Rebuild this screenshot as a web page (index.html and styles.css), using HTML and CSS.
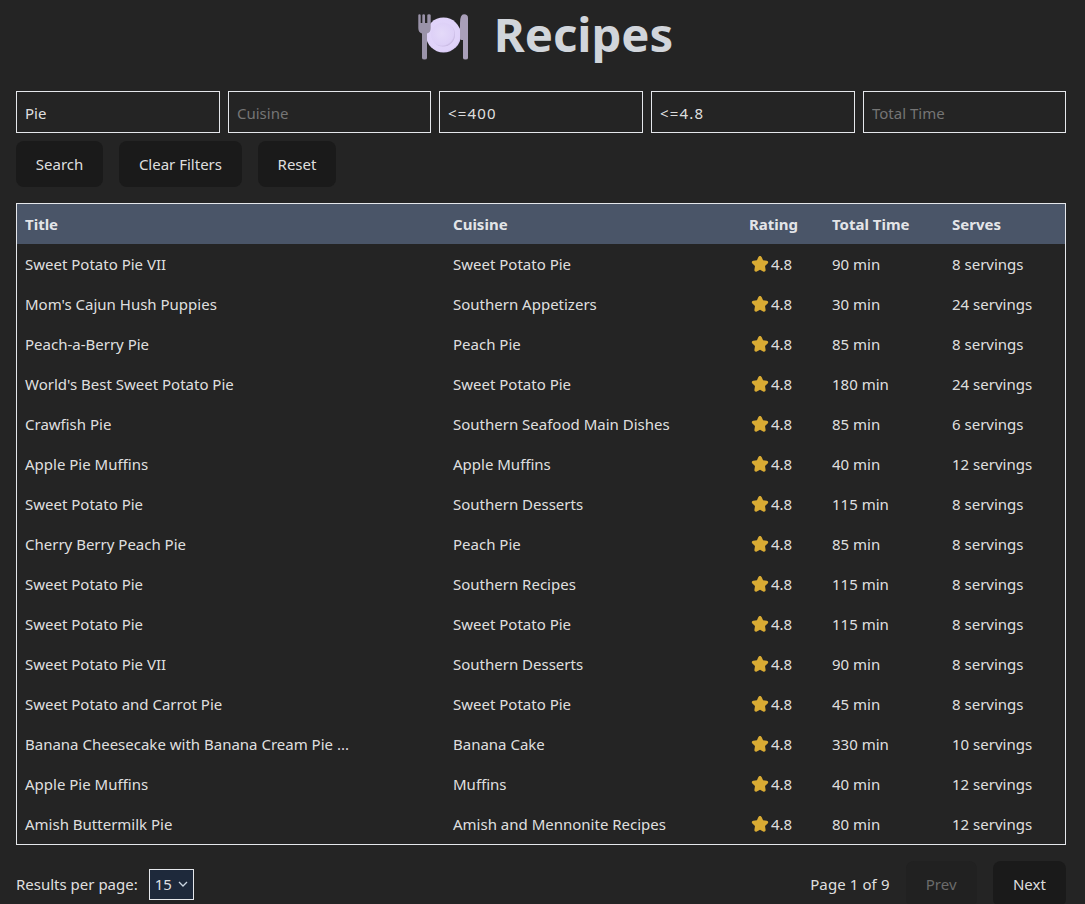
FILE: index.html
```html
<!DOCTYPE html>
<html lang="en">
<head>
    <meta charset="UTF-8">
    <meta name="viewport" content="width=device-width, initial-scale=1.0">
    <title>Recipes</title>
    <link rel="stylesheet" href="styles.css">
</head>
<body>
    <header class="page-title">
        <svg class="title-icon" viewBox="0 0 52 48" width="52" height="48" aria-hidden="true">
            <defs>
                <radialGradient id="plate" cx="0.45" cy="0.45" r="0.6">
                    <stop offset="0" stop-color="#e3d8fa"/>
                    <stop offset="0.85" stop-color="#dfd2f9"/>
                    <stop offset="1" stop-color="#cfc0ee"/>
                </radialGradient>
                <radialGradient id="plate-inner" cx="0.45" cy="0.45" r="0.58">
                    <stop offset="0" stop-color="#e4daf9"/>
                    <stop offset="0.85" stop-color="#ddd0f7"/>
                    <stop offset="1" stop-color="#c0b1da"/>
                </radialGradient>
            </defs>
            <circle cx="26.500" cy="22" r="17.500" fill="url(#plate)"/>
            <circle cx="26" cy="21.500" r="12" fill="url(#plate-inner)"/>
            <path d="M1.300 2.300 Q1.300 1.300 2.500 1.300 Q3.700 1.300 3.700 2.300 V10 H5.300 V2.300 Q5.300 1.300 6.600 1.300 Q8 1.300 8 2.300 V10 H10.300 V2.300 Q10.300 1.300 12 1.300 Q13.700 1.300 13.700 2.300 V15 Q13.700 19.500 10 20.500 V45 Q10 46.500 7.500 46.500 Q5 46.500 5 45 V20.500 Q1.300 19.500 1.300 15 Z" fill="#9a93a9"/>
            <path d="M47 1.300 Q51 1.300 51 5 V45 Q51 46.500 48.500 46.500 Q46 46.500 46 45 V27 H44.500 Q43 27 43 25 V10 Q43 1.300 47 1.300 Z" fill="#a99fb9"/>
        </svg>
        <h1>Recipes</h1>
    </header>

    <form class="filters">
        <div class="filter-inputs">
            <input type="text" value="Pie" placeholder="Title">
            <input type="text" placeholder="Cuisine">
            <input class="op-value" type="text" value="&lt;=400" placeholder="Calories">
            <input class="op-value" type="text" value="&lt;=4.8" placeholder="Rating">
            <input type="text" placeholder="Total Time">
        </div>
        <div class="filter-buttons">
            <button type="button">Search</button>
            <button type="button">Clear Filters</button>
            <button type="button">Reset</button>
        </div>
    </form>

    <table class="recipes">
        <colgroup>
            <col class="col-title">
            <col class="col-cuisine">
            <col class="col-rating">
            <col class="col-time">
            <col class="col-serves">
        </colgroup>
        <thead>
            <tr>
                <th>Title</th>
                <th>Cuisine</th>
                <th>Rating</th>
                <th>Total Time</th>
                <th>Serves</th>
            </tr>
        </thead>
        <tbody id="rows"></tbody>
    </table>

    <footer class="pager">
        <div class="per-page">
            <label for="per-page">Results per page:</label>
            <select id="per-page">
                <option>15</option>
                <option>30</option>
                <option>50</option>
            </select>
        </div>
        <div class="page-nav">
            <span>Page 1 of 9</span>
            <button type="button" disabled>Prev</button>
            <button type="button">Next</button>
        </div>
    </footer>

    <script>
        const recipes = [
            ['Sweet Potato Pie VII', 'Sweet Potato Pie', 90, 8],
            ["Mom's Cajun Hush Puppies", 'Southern Appetizers', 30, 24],
            ['Peach-a-Berry Pie', 'Peach Pie', 85, 8],
            ["World's Best Sweet Potato Pie", 'Sweet Potato Pie', 180, 24],
            ['Crawfish Pie', 'Southern Seafood Main Dishes', 85, 6],
            ['Apple Pie Muffins', 'Apple Muffins', 40, 12],
            ['Sweet Potato Pie', 'Southern Desserts', 115, 8],
            ['Cherry Berry Peach Pie', 'Peach Pie', 85, 8],
            ['Sweet Potato Pie', 'Southern Recipes', 115, 8],
            ['Sweet Potato Pie', 'Sweet Potato Pie', 115, 8],
            ['Sweet Potato Pie VII', 'Southern Desserts', 90, 8],
            ['Sweet Potato and Carrot Pie', 'Sweet Potato Pie', 45, 8],
            ['Banana Cheesecake with Banana Cream Pie ...', 'Banana Cake', 330, 10],
            ['Apple Pie Muffins', 'Muffins', 40, 12],
            ['Amish Buttermilk Pie', 'Amish and Mennonite Recipes', 80, 12]
        ];

        const star = '<svg class="star" viewBox="0 0 18 18" width="18" height="18" aria-hidden="true">'
            + '<path d="M9 1 C9.800 1 10.300 1.500 10.600 2.100 L12.100 5.300 L15.700 5.800 C17.200 6 17.700 7.500 16.600 8.600 L14 11.100 L14.600 14.800 C14.800 16.300 13.500 17.200 12.200 16.500 L9 14.800 L5.800 16.500 C4.500 17.200 3.200 16.300 3.400 14.800 L4 11.100 L1.400 8.600 C0.300 7.500 0.800 6 2.300 5.800 L5.900 5.300 L7.400 2.100 C7.700 1.500 8.200 1 9 1 Z" fill="#d9ab33"/>'
            + '</svg>';

        const rows = document.getElementById('rows');
        for (const [title, cuisine, time, serves] of recipes) {
            rows.insertAdjacentHTML('beforeend', `<tr>
                <td>${title}</td>
                <td>${cuisine}</td>
                <td><span class="rating">${star}4.8</span></td>
                <td>${time} min</td>
                <td>${serves} servings</td>
            </tr>`);
        }
    </script>
</body>
</html>
```

FILE: styles.css
```css
html {
    overflow: hidden;
}

body {
    margin: 0;
    padding: 0 19px 0 16px;
    background-color: #242424;
    color: rgba(255, 255, 255, 0.87);
    font-family: "Noto Sans", "Open Sans", sans-serif;
    font-size: 15px;
    line-height: 24px;
}

.page-title {
    display: flex;
    justify-content: center;
    align-items: center;
    gap: 25px;
    height: 91px;
    padding-left: 8px;
    padding-bottom: 23px;
    box-sizing: border-box;
}

.title-icon {
    flex: none;
    margin-top: 6px;
}

.page-title h1 {
    margin: 0 0 2px;
    color: #d1d5db;
    font-size: 47.300px;
    font-weight: 700;
    line-height: 71px;
}

.filter-inputs {
    display: grid;
    grid-template-columns: 204px 203px 204px 204px 1fr;
    gap: 8px;
}

.filter-inputs input {
    min-width: 0;
    height: 42px;
    padding: 2px 8px 0;
    box-sizing: border-box;
    background-color: #242424;
    color: rgba(255, 255, 255, 0.87);
    border: 1px solid #e5e7eb;
    font: inherit;
    outline: none;
}

.filter-inputs input::placeholder {
    color: #757575;
}

.filter-inputs .op-value {
    letter-spacing: 1.200px;
}

.filter-buttons {
    display: flex;
    gap: 16px;
    margin-top: 8px;
}

button {
    height: 46px;
    padding: 0 18.800px;
    background-color: #1a1a1a;
    color: rgba(255, 255, 255, 0.87);
    border: 1px solid transparent;
    border-radius: 8px;
    font: inherit;
    cursor: pointer;
}

button:disabled {
    color: #6b6b6b;
    background-color: #212121;
    cursor: default;
}

.recipes {
    width: 100%;
    margin-top: 16px;
    border: 1px solid #e5e7eb;
    border-collapse: separate;
    border-spacing: 0;
    table-layout: fixed;
}

.col-title { width: 428px; }
.col-cuisine { width: 296px; }
.col-rating { width: 83px; }
.col-time { width: 120px; }

.recipes th {
    height: 40px;
    padding: 0 8px;
    background-color: #4a5568;
    text-align: left;
    font-weight: 700;
}

.recipes td {
    height: 40px;
    padding: 0 8px;
    white-space: nowrap;
    overflow: hidden;
}

.rating {
    display: flex;
    align-items: center;
    gap: 2px;
    margin-left: 2px;
}

.star {
    flex: none;
}

.pager {
    display: flex;
    justify-content: space-between;
    align-items: center;
    margin-top: 16px;
}

.per-page {
    display: flex;
    align-items: center;
    gap: 11px;
}

.per-page select {
    appearance: none;
    width: 45px;
    height: 31px;
    padding: 0 0 0 5px;
    background-color: #1e293b;
    background-image: url("data:image/svg+xml,%3Csvg xmlns='http://www.w3.org/2000/svg' width='10' height='6' viewBox='0 0 10 6'%3E%3Cpath d='M1 1l4 4 4-4' fill='none' stroke='%23cbd5e1' stroke-width='1.300'/%3E%3C/svg%3E");
    background-repeat: no-repeat;
    background-position: right 5px center;
    color: rgba(255, 255, 255, 0.87);
    border: 1px solid #e5e7eb;
    border-radius: 0;
    font: inherit;
}

.page-nav {
    display: flex;
    align-items: center;
    gap: 16px;
}

.page-nav button {
    padding: 0 19.200px;
}

.page-nav span {
    letter-spacing: 0.100px;
}
```
